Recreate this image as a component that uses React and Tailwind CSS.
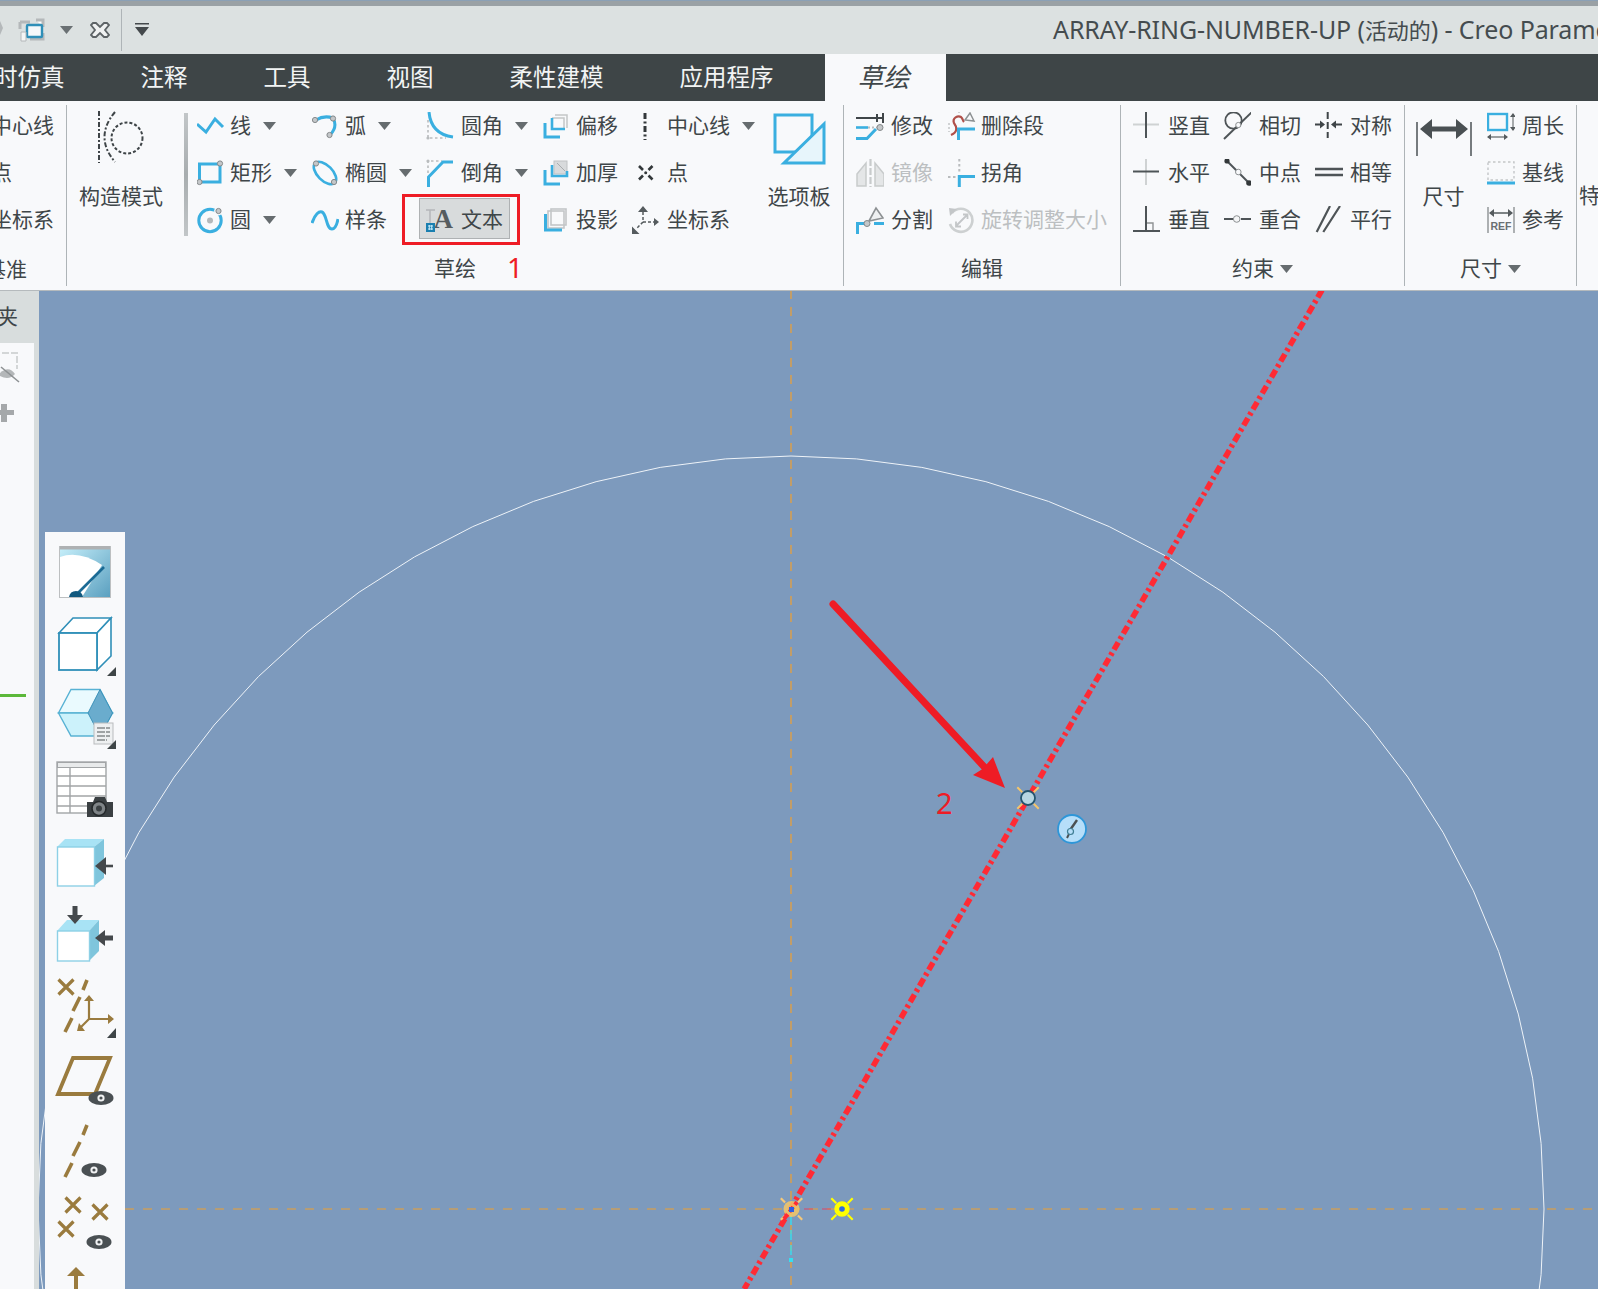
import React from "react";

const B = "#3aafe0";
const BR = "#9a7b3e";

const Ico = ({ w = 28, h = 28, children, className = "" }) => (
  <svg width={w} height={h} viewBox={`0 0 ${w} ${h}`} fill="none" className={`shrink-0 ${className}`}>
    {children}
  </svg>
);
const Dot = ({ x, y, r = 2.6 }) => <circle cx={x} cy={y} r={r} fill="#c4c7c9" stroke="#85898b" strokeWidth="1" />;

const icons = {
  line: <path d="M0 12L9 20L18 7L26 15" stroke={B} strokeWidth="3" />,
  arc: <><path d="M5 8Q13 3 22 6Q27 15 19 23" stroke={B} strokeWidth="3" /><Dot x={4} y={8} /><Dot x={22} y={6.5} /><Dot x={18.5} y={23} /></>,
  fillet: <><path d="M2 8V26H20" stroke="#b9bcbe" strokeWidth="1.6" strokeDasharray="2.5 2.5" /><circle cx="2" cy="26" r="1.6" fill="#b9bcbe" /><path d="M3 0Q5 22 27 25" stroke={B} strokeWidth="3" /></>,
  rect: <><path d="M23 5H2.5V23H23V5" stroke={B} strokeWidth="3" /><Dot x={23} y={4.5} /><Dot x={2.5} y={23} /></>,
  ellipse: <><ellipse cx="14" cy="14" rx="14" ry="7.5" transform="rotate(45 14 14)" stroke={B} strokeWidth="2.6" /><Dot x={5} y={4.5} /><Dot x={23} y={23} /></>,
  chamfer: <><path d="M2 14V2H16" stroke="#b9bcbe" strokeWidth="1.6" strokeDasharray="2.5 2.5" /><circle cx="2" cy="2" r="1.6" fill="#b9bcbe" /><path d="M2.5 28V18L17 3H27" stroke={B} strokeWidth="3" /></>,
  circle: <><circle cx="13" cy="14.5" r="11.2" stroke={B} strokeWidth="3" /><circle cx="21.5" cy="5" r="4.4" fill="#f8f9fb" /><circle cx="13" cy="14.5" r="3" fill="#b4b8ba" /><Dot x={21.5} y={5} /></>,
  spline: <path d="M1 17C4 8 8 5 11 6C16 8 15 23 21 23C24 23 26 18 27 13" stroke={B} strokeWidth="3" />,
  text: <>
    <path d="M0 4H9M4 4V17" stroke="#b4b7b9" strokeWidth="1.5" />
    <text x="7.5" y="22" fontFamily="Liberation Serif" fontWeight="700" fontSize="27" fill="#565c5f">A</text>
    <rect x="0" y="17" width="9" height="9" fill="#1a7fb0" /><path d="M2 20H7M2 23H7M3.3 19V24M5.7 19V24" stroke="#c8ecfa" strokeWidth="1" />
  </>,
  offset: <><path d="M12 3H24V16" stroke="#c3c6c8" strokeWidth="1.5" /><path d="M9 6H21V17" stroke="#c3c6c8" strokeWidth="1.5" /><path d="M9 6V17H22" stroke={B} strokeWidth="2.6" /><path d="M2 11V25H17" stroke={B} strokeWidth="3" /></>,
  thicken: <><rect x="11" y="2" width="13" height="13" fill="#d8dadc" stroke="#bfc2c4" /><path d="M14 4L22 12" stroke="#a9acae" /><path d="M9 6V17H24V12" stroke={B} strokeWidth="2.6" /><path d="M2 11V25H17" stroke={B} strokeWidth="3" /></>,
  project: <><rect x="8" y="3" width="15" height="16" stroke="#c3c6c8" strokeWidth="1.6" /><rect x="5" y="5" width="16" height="17" stroke="#c3c6c8" strokeWidth="1.6" /><path d="M2.5 8V24H19" stroke={B} strokeWidth="3" /></>,
  center: <path d="M13 1V28" stroke="#33383a" strokeWidth="3" strokeDasharray="6 2.5 2 2.5" />,
  point: <><path d="M7 7L11 11M20.5 7L16.5 11M7 20.5L11 16.5M20.5 20.5L16.5 16.5" stroke="#33383a" strokeWidth="2.6" /><circle cx="13.7" cy="13.7" r="1.5" fill="#33383a" /></>,
  csys: <>
    <path d="M11 6V16M11 16H22M11 16L4 23" stroke="#555b5e" strokeWidth="1.5" strokeDasharray="3 2" />
    <path d="M11 0L6 6H16ZM27 16L22 12V20ZM0 28H7.5L0 20.5Z" fill="#555b5e" />
  </>,
  modify: <>
    <path d="M0 6H27M21 2V10M27 1V11" stroke="#3f4548" strokeWidth="2" />
    <path d="M0 15.5H12" stroke={B} strokeWidth="2.6" />
    <path d="M12 15.5H22" stroke="#b9bcbe" strokeWidth="2" strokeDasharray="2 2" />
    <path d="M0 26.5H11L20 17" stroke={B} strokeWidth="3" /><Dot x={24} y={15.5} r={3} />
  </>,
  del: <>
    <path d="M3 23C10 20 9 15 6 11C4 6 10 3 13 5C15 7 15 9 16 10" stroke="#b0504a" strokeWidth="2.2" />
    <path d="M10.5 28V17H27" stroke={B} strokeWidth="3" />
    <path d="M17 8L22 1L26 9Z" stroke="#8d9193" strokeWidth="1.5" />
    <path d="M1 11V20M10 0H12" stroke="#c2c5c7" strokeWidth="1.5" strokeDasharray="2 2" />
  </>,
  mirror: <>
    <path d="M14.5 0V28" stroke="#c8cbcc" strokeWidth="2.2" strokeDasharray="7 2" />
    <path d="M1 15L10 4V27H1ZM28 15L19 4V27H28Z" fill="#e4e6e7" stroke="#c8cbcc" strokeWidth="1.5" />
  </>,
  corner: <>
    <path d="M11.3 0V13M0 18H9" stroke="#b9bcbe" strokeWidth="2" strokeDasharray="2.5 2.5" />
    <path d="M11.3 28V17.5H27" stroke={B} strokeWidth="3" />
  </>,
  split: <>
    <path d="M1.5 28V17.5H9" stroke={B} strokeWidth="3" /><path d="M18 17.5H28" stroke={B} strokeWidth="3" />
    <path d="M13 15L20 2L27 12Z" stroke="#8d9193" strokeWidth="1.6" fill="#eef0f1" /><Dot x={11} y={17.5} r={3} />
  </>,
  rotate: <>
    <path d="M4 7A11.5 11.5 0 1 1 2 18" stroke="#cdd0d1" strokeWidth="2.6" />
    <path d="M1 2L9 3L2 10Z" fill="#c3c6c8" /><path d="M8 20L19 9M15 8.5H19.5V13M8 15.5V20.5H13" stroke="#c3c6c8" strokeWidth="1.8" />
  </>,
  vert: <><path d="M1 12.5H27" stroke="#cfd2d3" strokeWidth="2" /><path d="M14 0V26" stroke="#4e5457" strokeWidth="2" /></>,
  horiz: <><path d="M14 0V26" stroke="#cfd2d3" strokeWidth="2" /><path d="M1 12.5H27" stroke="#4e5457" strokeWidth="2" /></>,
  perp: <><path d="M1 25H29M14 0V25" stroke="#4e5457" strokeWidth="2" /><path d="M15 17H21V24" stroke="#8d9193" strokeWidth="1.4" /></>,
  tangent: <><circle cx="10.5" cy="8.5" r="8.2" stroke="#4e5457" strokeWidth="1.8" /><path d="M1 27L28.5 0.5" stroke="#4e5457" strokeWidth="2" /><circle cx="15.3" cy="13" r="2.6" fill="#f8f9fb" stroke="#8d9193" /></>,
  mid: <><path d="M4 2L26 24" stroke="#4e5457" strokeWidth="2" /><circle cx="4" cy="2" r="2.6" fill="#33383a" /><circle cx="26" cy="24" r="2.8" fill="#33383a" /><circle cx="15.3" cy="13" r="2.8" fill="#f8f9fb" stroke="#8d9193" /></>,
  coin: <><path d="M1 13H10M18 13H28" stroke="#4e5457" strokeWidth="2" /><circle cx="13.7" cy="13" r="3.3" fill="#f4f5f6" stroke="#8d9193" /></>,
  sym: <><path d="M12.7 0V26" stroke="#3f4548" strokeWidth="2" strokeDasharray="7 3" /><path d="M0 12.5H5M21 12.5H27" stroke="#3f4548" strokeWidth="2" /><path d="M10 12.5L5 8.5V16.5ZM16 12.5L21 8.5V16.5Z" fill="#3f4548" /></>,
  equal: <path d="M0 10H28M0 16H28" stroke="#4e5457" strokeWidth="2.4" />,
  para: <path d="M1.7 26L15 0M8.3 26L25 0" stroke="#4e5457" strokeWidth="2.2" />,
  peri: <><rect x="1" y="2" width="19" height="16" stroke={B} strokeWidth="2.4" /><path d="M26 2V18M1 25H20" stroke="#7b8082" strokeWidth="1.3" /><path d="M26 1L23 5H29ZM26 19L23 15H29ZM0 25L4 22V28ZM21 25L17 22V28Z" fill="#555b5e" /></>,
  base: <><rect x="1" y="3" width="26" height="18" stroke="#c3c6c8" strokeWidth="1.4" strokeDasharray="2.5 2.5" /><path d="M0 24H28" stroke={B} strokeWidth="3" /></>,
  ref: <>
    <path d="M1 1V27M27 1V27" stroke="#9a9ea0" strokeWidth="1.6" /><path d="M3 7H25" stroke="#555b5e" strokeWidth="1.5" /><path d="M2 7L7 3V11ZM26 7L21 3V11Z" fill="#555b5e" />
    <text x="3.5" y="24" fontFamily="Liberation Sans" fontWeight="700" fontSize="10.5" fill="#6a6f72" textLength="21">REF</text>
  </>,
};

const Arrow = ({ className = "ml-[12px]" }) => (
  <svg width="13" height="8" viewBox="0 0 13 8" className={`shrink-0 ${className}`}><path d="M0 0H13L6.5 8Z" fill="#666c6f" /></svg>
);

const Item = ({ ic, t, arrow, dis, gap = 5, w = 28, extra }) => (
  <div className={`relative flex items-center h-[47px] whitespace-nowrap ${dis ? "text-[#bcbfc1]" : ""}`}>
    {extra}
    <div className="relative flex items-center">
      <Ico w={w}>{icons[ic]}</Ico>
      <span style={{ marginLeft: gap }}>{t}</span>
      {arrow && <Arrow />}
    </div>
  </div>
);

const Col = ({ className, children }) => <div className={`flex flex-col shrink-0 ${className}`}>{children}</div>;
const Sep = () => <div className="w-px my-[4px] bg-[#aeb4b7] shrink-0" />;
const Lab = ({ children }) => (
  <div className="mt-[6px] h-[40px] flex items-center justify-center">{children}</div>
);

const Big = ({ className, label, children }) => (
  <div className={`flex flex-col items-center shrink-0 ${className}`}>
    <div className="h-[76px] flex items-end justify-center">{children}</div>
    <div className="mt-[2px] h-[32px] leading-[32px] whitespace-nowrap">{label}</div>
  </div>
);

const TBox = ({ children, className = "" }) => (
  <svg width="72" height="72" viewBox="0 0 72 72" fill="none" className={`block shrink-0 ${className}`}>{children}</svg>
);
const Tri = ({ y = 68 }) => <path d={`M58 ${y}H67V${y - 9}Z`} fill="#3e4547" />;
const Eye = ({ x, y }) => (
  <g>
    <ellipse cx={x} cy={y} rx="12.5" ry="7" fill="#4a5053" />
    <circle cx={x} cy={y} r="3.6" fill="#f1f2f3" /><circle cx={x} cy={y} r="1.6" fill="#4a5053" />
  </g>
);
const XM = ({ x, y, s = 7.5 }) => (
  <path d={`M${x - s} ${y - s}L${x + s} ${y + s}M${x + s} ${y - s}L${x - s} ${y + s}`} stroke={BR} strokeWidth="3.2" />
);
const Slashes = ({ o = 0 }) => (
  <path d={`M38 ${12 + o}L34 ${22 + o}M31 ${29 + o}L24 ${43 + o}M23 ${50 + o}L16 ${64 + o}`} stroke={BR} strokeWidth="3.6" />
);

const tools = [
  <TBox key="0">
    <defs><linearGradient id="g0" x1="0" y1="0" x2="1" y2="1"><stop offset="0" stopColor="#c8f0fb" /><stop offset="1" stopColor="#5a9fbf" /></linearGradient></defs>
    <rect x="10.5" y="10.5" width="51" height="51" fill="url(#g0)" stroke="#bcbfc1" />
    <rect x="11" y="10" width="50" height="3.5" fill="#aeb1b3" />
    <path d="M11 21Q30 14 53 29L33 61H11Z" fill="#fff" />
    <path d="M28 58L55 31" stroke="#1b6a94" strokeWidth="2.6" />
    <path d="M20 61Q21 55 27 55Q33 55 34 61Z" fill="#12597f" />
  </TBox>,
  <TBox key="1">
    <path d="M10 25L24 10H62L48 25Z" fill="#fff" stroke="#2f8fb8" strokeWidth="1.6" />
    <path d="M48 25L62 10V48L48 62Z" fill="#fff" stroke="#2f8fb8" strokeWidth="1.6" />
    <rect x="10" y="25" width="38" height="37" fill="#fff" stroke="#2f8fb8" strokeWidth="1.8" />
    <Tri />
  </TBox>,
  <TBox key="2">
    <path d="M9.5 33L22 9.5H51L63.5 33Z" fill="#eafafe" stroke="#58b2d4" strokeWidth="1.4" />
    <path d="M9.5 33L22 56H51L63.5 33Z" fill="#ccf2fb" stroke="#58b2d4" strokeWidth="1.4" />
    <path d="M51 9.5L63.5 33L51 56L39 33Z" fill="#6aaccd" stroke="#3d93ba" strokeWidth="1" />
    <rect x="45" y="43" width="19" height="21" fill="#eef0f1" stroke="#b9bcbe" />
    <path d="M48 48H61M48 52H61M48 56H61M48 60H58" stroke="#85898b" strokeWidth="1.4" strokeDasharray="8 1" />
    <Tri y={69} />
  </TBox>,
  <TBox key="3">
    <rect x="8" y="10" width="49" height="51" fill="#fff" stroke="#a2a5a7" strokeWidth="1.4" />
    <rect x="8.5" y="10.5" width="48" height="5" fill="#e8eaeb" stroke="#a2a5a7" />
    <path d="M8 24H57M8 34H57M8 44H57M8 54H57M21 16V61" stroke="#a2a5a7" strokeWidth="1.4" />
    <path d="M38 50H44L46 45H56L58 50H64V65H38Z" fill="#3b4043" />
    <circle cx="50" cy="56.5" r="7" fill="#7f8487" stroke="#25292b" strokeWidth="1.6" /><circle cx="50" cy="56.5" r="3" fill="#3b4043" />
  </TBox>,
  <TBox key="4">
    <path d="M8 23L16 15H55L45 23Z" fill="#a8e3f5" />
    <path d="M45 23L55 15V54L45 62Z" fill="#7fc5dc" />
    <rect x="8.5" y="23" width="37" height="39" fill="#fff" stroke="#8dd0e6" strokeWidth="1.4" />
    <path d="M56 42H64" stroke="#45494c" strokeWidth="2.6" /><path d="M46 42L57 33V51Z" fill="#45494c" />
  </TBox>,
  <TBox key="5">
    <path d="M8 35L18 24H50L40 35Z" fill="#a8e3f5" />
    <path d="M40 35L50 24V55L40 65Z" fill="#7fc5dc" />
    <rect x="8.5" y="35" width="32" height="30" fill="#fff" stroke="#8dd0e6" strokeWidth="1.4" />
    <path d="M26 10V20" stroke="#45494c" strokeWidth="5" /><path d="M18 19H34L26 28Z" fill="#45494c" />
    <path d="M56 42H64" stroke="#45494c" strokeWidth="5" /><path d="M46 42L56 34V50Z" fill="#45494c" />
  </TBox>,
  <TBox key="6">
    <XM x={17} y={19} /><Slashes />
    <path d="M40 31V51H62M40 51L31 60" stroke={BR} strokeWidth="2.2" />
    <path d="M40 27L35 33H45ZM65 51L59 46V56ZM28 63H36L30 55Z" fill={BR} />
    <path d="M58 70H67V60Z" fill="#3e4547" />
  </TBox>,
  <TBox key="7">
    <path d="M24 18H61L46 54H9Z" stroke={BR} strokeWidth="3.8" /><Eye x={52} y={58} />
  </TBox>,
  <TBox key="8"><Slashes o={1} /><Eye x={45} y={58} /></TBox>,
  <TBox key="9"><XM x={24} y={21} /><XM x={51} y={28} /><XM x={17} y={45} /><Eye x={50} y={58} /></TBox>,
  <TBox key="10"><path d="M27 11L18 20H36Z" fill={BR} /><path d="M27 18V72" stroke={BR} strokeWidth="4" /></TBox>,
];

const CX = 791, CY = 1209, R = 753;
const pts = Array.from({ length: 72 }, (_, i) => {
  const a = (i / 72) * 2 * Math.PI;
  return `${(CX + R * Math.cos(a)).toFixed(1)},${(CY + R * Math.sin(a)).toFixed(1)}`;
}).join(" ");

const Ticks = ({ x, y, c, w = 2, r = 9, e = 15 }) => (
  <path d={[[1, 1], [1, -1], [-1, 1], [-1, -1]].map(([a, b]) => `M${x + (a * r) / 1.4} ${y + (b * r) / 1.4}L${x + (a * e) / 1.4} ${y + (b * e) / 1.4}`).join("")} stroke={c} strokeWidth={w} />
);

export default function App() {
  return (
    <div className="relative w-[1598px] h-[1289px] overflow-hidden flex flex-col bg-[#f8f9fb] text-[#3f4649] text-[21px] font-['Noto_Sans','Noto_Sans_CJK_SC',sans-serif]">
      <div className="h-[6px] bg-[#9aa1a5] border-t border-[#8ba0b5] shrink-0" />
      {/* title bar */}
      <div className="h-[48px] bg-[#dce1e1] shrink-0 flex items-center whitespace-nowrap">
        <svg width="3" height="14" viewBox="0 0 3 14" className="-mt-[4px] shrink-0"><path d="M0 0L3 7L0 14Z" fill="#b4b8ba" /></svg>
        <svg width="30" height="30" viewBox="0 0 30 30" fill="none" className="ml-[15px] shrink-0">
          <path d="M2 7H12M18 5H25V12M2 7V14M25 18V24H12" stroke="#b4b8ba" strokeWidth="3" fill="#fff" />
          <rect x="9" y="10" width="15" height="12" rx="1" fill="#f5f8fa" stroke="#2f8fb8" strokeWidth="2.4" />
          <path d="M3 17H8V26H3Z" fill="#f4f5f5" stroke="#b4b8ba" />
        </svg>
        <svg width="13" height="8" viewBox="0 0 13 8" className="ml-[12px] shrink-0"><path d="M0 0H13L6.5 8Z" fill="#6a7073" /></svg>
        <svg width="20" height="18" viewBox="0 0 20 18" fill="none" className="ml-[17px] shrink-0">
          <path d="M3 2H6L10 6L14 2H17L19 4L15 9L19 14L17 16H14L10 12L6 16H3L1 14L5 9L1 4Z" fill="#f0f2f2" stroke="#5d6366" strokeWidth="1.8" />
        </svg>
        <div className="ml-[11px] w-px h-[42px] bg-[#aeb4b7] shrink-0" />
        <svg width="14" height="14" viewBox="0 0 14 14" className="ml-[13px] shrink-0"><path d="M0 0H14V1.5H0ZM0 4H14L7 13Z" fill="#44494c" /></svg>
        <div className="ml-[904px] text-[25px] tracking-[-0.1px] text-[#454c4f]">ARRAY-RING-NUMBER-UP (<span className="text-[22px]">活动的</span>) - Creo Parametric</div>
      </div>
      {/* tabs */}
      <div className="h-[47px] bg-[#3e4547] shrink-0 flex items-center text-[23.5px] text-[#f2f4f4] whitespace-nowrap">
        <div className="flex gap-[76px] -ml-[6px] pt-px">
          <span>时仿真</span><span>注释</span><span>工具</span><span>视图</span><span>柔性建模</span><span>应用程序</span>
        </div>
        <div className="ml-[51px] w-[121px] h-full bg-[#f8f9fb] text-[#3f4649] text-[26px] flex items-center justify-center italic pr-[3px]">草绘</div>
      </div>
      {/* ribbon */}
      <div className="h-[190px] shrink-0 flex items-stretch border-b border-[#b5babd]">
        <div className="w-[66px] shrink-0 overflow-hidden flex flex-col">
          <div className="h-[141px] -ml-[9px] pt-px">
            <div className="h-[47px] leading-[47px] whitespace-nowrap">中心线</div>
            <div className="h-[47px] leading-[47px]">点</div>
            <div className="h-[47px] leading-[47px] whitespace-nowrap">坐标系</div>
          </div>
          <div className="mt-[7px] h-[40px] leading-[40px] -ml-[15px] whitespace-nowrap">基准</div>
        </div>
        <Sep />
        {/* sketch */}
        <div className="w-[776px] shrink-0 flex flex-col pt-px">
          <div className="flex h-[141px]">
            <Big className="w-[108px]" label="构造模式">
              <svg width="50" height="52" viewBox="0 0 50 52" fill="none" className="mb-[15px] ml-[2px]">
                <path d="M2 0V52" stroke="#3f4548" strokeWidth="2" strokeDasharray="5 2 2 2" />
                <path d="M18 1Q-3 26 18 51" stroke="#3f4548" strokeWidth="2" strokeDasharray="5 2 2 2" />
                <circle cx="30" cy="27" r="15.5" stroke="#3f4548" strokeWidth="2" strokeDasharray="3 2" />
              </svg>
            </Big>
            <div className="ml-[9px] mt-[11px] w-[4px] h-[123px] bg-gradient-to-b from-[#c2c6c8] via-[#a8adaf] to-[#c2c6c8] shrink-0" />
            <Col className="ml-[9px] w-[114px]">
              <Item ic="line" t="线" arrow /><Item ic="rect" t="矩形" arrow /><Item ic="circle" t="圆" arrow />
            </Col>
            <Col className="w-[115px]">
              <Item ic="arc" t="弧" gap={6} arrow /><Item ic="ellipse" t="椭圆" gap={6} arrow /><Item ic="spline" t="样条" gap={6} />
            </Col>
            <Col className="w-[117px]">
              <Item ic="fillet" t="圆角" gap={7} arrow /><Item ic="chamfer" t="倒角" gap={7} arrow />
              <Item ic="text" t="文本" gap={7} extra={
                <>
                  <div className="absolute left-[-7px] top-[2px] w-[91px] h-[41px] bg-[#d8dbdc] border border-[#aeb1b3]" />
                  <div className="absolute left-[-24px] top-[-2px] w-[118px] h-[51px] border-[3px] border-[#ee1c25]" />
                </>
              } />
            </Col>
            <Col className="w-[89px]">
              <Item ic="offset" t="偏移" gap={5} /><Item ic="thicken" t="加厚" gap={5} /><Item ic="project" t="投影" gap={5} />
            </Col>
            <Col className="w-[123px]">
              <Item ic="center" t="中心线" gap={7} arrow /><Item ic="point" t="点" gap={7} /><Item ic="csys" t="坐标系" gap={7} />
            </Col>
            <Big className="w-[88px]" label="选项板">
              <svg width="55" height="55" viewBox="0 0 55 55" fill="none" className="mb-[11px]">
                <rect x="3" y="3" width="37" height="37" fill="#f8f9fb" stroke={B} strokeWidth="3" />
                <path d="M12 51H52V12Z" fill="#e7f5fb" stroke={B} strokeWidth="3" />
              </svg>
            </Big>
          </div>
          <Lab>
            <span className="relative">草绘
              <span className="absolute left-[73px] top-[-7px] text-[28px] text-[#ee1c25]">1</span>
            </span>
          </Lab>
        </div>
        <Sep />
        {/* edit */}
        <div className="w-[276px] shrink-0 flex flex-col pt-px">
          <div className="flex h-[141px] pl-[12px]">
            <Col className="w-[92px]">
              <Item ic="modify" t="修改" gap={7} /><Item ic="mirror" t="镜像" gap={7} dis /><Item ic="split" t="分割" gap={7} />
            </Col>
            <Col>
              <Item ic="del" t="删除段" gap={5} /><Item ic="corner" t="拐角" gap={5} /><Item ic="rotate" t="旋转调整大小" gap={5} dis />
            </Col>
          </div>
          <Lab>编辑</Lab>
        </div>
        <Sep />
        {/* constraints */}
        <div className="w-[283px] shrink-0 flex flex-col pt-px">
          <div className="flex h-[141px] pl-[11px]">
            <Col className="w-[91px]">
              <Item ic="vert" t="竖直" gap={8} /><Item ic="horiz" t="水平" gap={8} /><Item ic="perp" t="垂直" gap={8} />
            </Col>
            <Col className="w-[92px]">
              <Item ic="tangent" t="相切" gap={8} /><Item ic="mid" t="中点" gap={8} /><Item ic="coin" t="重合" gap={8} />
            </Col>
            <Col>
              <Item ic="sym" t="对称" gap={7} /><Item ic="equal" t="相等" gap={7} /><Item ic="para" t="平行" gap={7} />
            </Col>
          </div>
          <Lab><span>约束</span><Arrow className="ml-[6px]" /></Lab>
        </div>
        <Sep />
        {/* dimension */}
        <div className="w-[171px] shrink-0 flex flex-col pt-px">
          <div className="flex h-[141px]">
            <Big className="w-[77px]" label="尺寸">
              <svg width="56" height="40" viewBox="0 0 56 40" fill="none" className="mb-[20px]">
                <path d="M1 4V38M55 4V38" stroke="#565c5f" strokeWidth="1.6" />
                <path d="M12 11H44" stroke="#4a5053" strokeWidth="5" /><path d="M4 11L16 1V21ZM52 11L40 1V21Z" fill="#4a5053" />
              </svg>
            </Big>
            <Col className="ml-[5px]">
              <Item ic="peri" t="周长" gap={7} /><Item ic="base" t="基线" gap={7} /><Item ic="ref" t="参考" gap={7} />
            </Col>
          </div>
          <Lab><span>尺寸</span><Arrow className="ml-[6px]" /></Lab>
        </div>
        <Sep />
        <div className="pl-[2px] w-[21px] overflow-hidden pt-[78px] leading-[32px] whitespace-nowrap">特征</div>
      </div>
      {/* main */}
      <div className="relative flex-1 flex bg-[#7d9abd] overflow-hidden">
        <svg className="absolute left-0 top-0" width="1598" height="999" viewBox="0 291 1598 999" fill="none">
          <polygon points={pts} stroke="#eef3f8" strokeWidth="1" />
          <path d="M791 290V1289" stroke="#f0a030" strokeWidth="1.2" strokeDasharray="9 8" />
          <path d="M125 1209H1598" stroke="#f0a030" strokeWidth="1.2" strokeDasharray="9 9" />
          <path d="M804 1209H852" stroke="#d9466a" strokeWidth="1.2" strokeDasharray="9 9" />
          <path d="M1322 290L744.2 1289" stroke="#ff2a34" strokeWidth="5.6" strokeDasharray="8.5 3.5 3 3.5" />
          <path d="M791 1215V1258" stroke="#35dff0" strokeWidth="1.4" strokeDasharray="10 5" />
          <rect x="789" y="1258" width="4" height="4" fill="#35dff0" />
          {/* origin */}
          <circle cx="791.5" cy="1209" r="8" fill="#f4c766" fillOpacity="0.85" />
          <Ticks x={791.5} y={1209} c="#f6c878" w={2.2} />
          <path d="M784 1219L797 1202" stroke="#ff2a34" strokeWidth="4" strokeDasharray="6 3" />
          <rect x="789" y="1207" width="5" height="5" fill="#2f5fe0" />
          {/* yellow */}
          <circle cx="842" cy="1209" r="6" stroke="#ffff00" strokeWidth="3.4" fill="#ffff00" />
          <circle cx="842" cy="1209" r="2.8" fill="#2f6ae0" />
          <Ticks x={842} y={1209} c="#ffff00" w={2.2} r={8} e={15} />
          {/* arrow */}
          <path d="M833 604L989 772" stroke="#ee1c25" strokeWidth="7" strokeLinecap="round" />
          <path d="M1005 788L973 775L984 768L986 765L993 757Z" fill="#ee1c25" />
          {/* cursor pt */}
          <Ticks x={1028} y={798} c="#f3c56c" w={2} r={8} e={15} />
          <circle cx="1028" cy="798" r="7" fill="#b7d6e2" stroke="#24556e" strokeWidth="1.8" />
          {/* tool */}
          <circle cx="1072" cy="829" r="14" fill="#b6def9" stroke="#2e96d8" strokeWidth="1.8" />
          <path d="M1068 833L1077 820" stroke="#4a5053" strokeWidth="2.4" />
          <path d="M1067 838L1069 834" stroke="#4a5053" strokeWidth="2" />
          <circle cx="1070.5" cy="831.5" r="3" fill="#b6def9" stroke="#3f7e94" strokeWidth="1.2" />
        </svg>
        <div className="absolute left-[936px] top-[497px] text-[29px] leading-[30px] text-[#ee1c25]">2</div>
        {/* left panel */}
        <div className="relative w-[39px] h-full shrink-0 bg-[#d8dddd] flex flex-col overflow-hidden">
          <div className="h-[52px] shrink-0 flex items-center -ml-[3px] text-[21px] whitespace-nowrap">夹</div>
          <div className="w-[34px] flex-1 bg-[#f8f9fb] flex flex-col">
            <svg width="24" height="34" viewBox="0 0 24 34" fill="none" className="mt-[8px]">
              <path d="M2 2H17V18" stroke="#d3d6d7" strokeWidth="2" strokeDasharray="7 2" />
              <path d="M0 22Q9 14 15 23Q9 30 0 25Z" fill="#b4b7b9" />
              <path d="M1 16L19 31" stroke="#8d9193" strokeWidth="1.6" />
            </svg>
            <div className="mt-[19px] relative h-[18px] w-[14px] shrink-0">
              <div className="absolute left-0 top-[6px] w-[14px] h-[5px] bg-[#a5a8aa]" />
              <div className="absolute left-[1px] top-0 w-[6px] h-[18px] bg-[#a5a8aa]" />
            </div>
            <div className="mt-[272px] w-[26px] h-[3px] bg-[#5cb83a] shrink-0" />
          </div>
        </div>
        {/* toolbar */}
        <div className="absolute left-[45px] top-[241px] w-[80px] h-[760px] bg-[#f8f9fb] pl-[4px] pt-[4px] flex flex-col overflow-hidden">
          {tools}
        </div>
      </div>
    </div>
  );
}
